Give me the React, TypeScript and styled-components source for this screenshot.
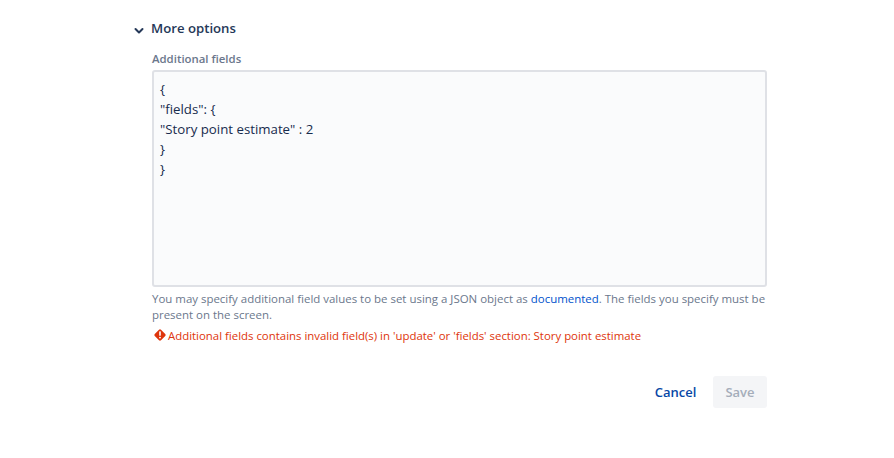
import styled, { createGlobalStyle } from "styled-components";

const GlobalStyle = createGlobalStyle`
  html, body {
    margin: 0;
    padding: 0;
    background: #fff;
  }
  body {
    font-family: "Open Sans", "Noto Sans", "Liberation Sans", sans-serif;
  }
`;

const Page = styled.div`
  width: 894px;
  height: 458px;
  box-sizing: border-box;
  padding: 18px 127px 0 132px;
  overflow: hidden;
`;

const Toggle = styled.div`
  display: flex;
  align-items: center;
  height: 20px;
  gap: 5px;
`;

const Chevron = styled.svg`
  width: 14px;
  height: 14px;
  margin-top: 5px;
  color: #253858;
`;

const ToggleLabel = styled.span`
  font-size: 13.2px;
  font-weight: 600;
  color: #253858;
`;

const Section = styled.div`
  margin: 13px 0 0 20px;
`;

const FieldLabel = styled.label`
  display: block;
  height: 16px;
  line-height: 16px;
  font-size: 11.4px;
  font-weight: 600;
  color: #6b778c;
`;

const JsonInput = styled.div`
  box-sizing: border-box;
  height: 217px;
  margin-top: 3px;
  padding: 7px 6px;
  border: 2px solid #dfe1e6;
  border-radius: 3px;
  background: #fafbfc;
  font-size: 13.25px;
  line-height: 20px;
  color: #172b4d;
`;

const JsonLine = styled.div`
  height: 20px;
`;

const Help = styled.p`
  margin: 4px 0 0;
  font-size: 11.46px;
  line-height: 16px;
  color: #6b778c;
`;

const DocLink = styled.a`
  color: #0052cc;
  text-decoration: none;
`;

const ErrorRow = styled.div`
  display: flex;
  align-items: center;
  gap: 1px;
  margin: 4px 0 0 1px;
  height: 16px;
  font-size: 11.42px;
  color: #de350b;
`;

const ErrorIcon = styled.svg`
  width: 14px;
  height: 14px;
  flex: none;
`;

const Actions = styled.div`
  display: flex;
  justify-content: flex-end;
  align-items: center;
  gap: 4px;
  margin-top: 33px;
`;

const Button = styled.button<{ $primary?: boolean }>`
  height: 32px;
  padding: 0 12.5px;
  border: 0;
  border-radius: 3px;
  font-family: inherit;
  font-size: 13px;
  font-weight: 600;
  background: ${(p) => (p.$primary ? "#f4f5f7" : "transparent")};
  color: ${(p) => (p.$primary ? "#a5adba" : "#0747a6")};
`;

const jsonLines = ["{", '"fields": {', '"Story point estimate" : 2', "}", "}"];

export default function App() {
  return (
    <Page>
      <GlobalStyle />
      <Toggle>
        <Chevron viewBox="0 0 14 14" fill="none">
          <path d="M3.5 5 L7 8.5 L10.5 5" stroke="currentColor" strokeWidth="2" strokeLinecap="round" strokeLinejoin="round" />
        </Chevron>
        <ToggleLabel>More options</ToggleLabel>
      </Toggle>
      <Section>
        <FieldLabel>Additional fields</FieldLabel>
        <JsonInput>
          {jsonLines.map((line, i) => (
            <JsonLine key={i}>{line}</JsonLine>
          ))}
        </JsonInput>
        <Help>
          You may specify additional field values to be set using a JSON object as <DocLink>documented</DocLink>. The fields you specify must be present on the screen.
        </Help>
        <ErrorRow>
          <ErrorIcon viewBox="0 0 14 14">
            <rect x="2.6" y="2.6" width="8.8" height="8.8" rx="1.4" fill="#de350b" transform="rotate(45 7 7)" />
            <rect x="6.2" y="3.2" width="1.6" height="4.6" rx="0.6" fill="#fff" />
            <circle cx="7" cy="9.6" r="0.95" fill="#fff" />
          </ErrorIcon>
          Additional fields contains invalid field(s) in 'update' or 'fields' section: Story point estimate
        </ErrorRow>
        <Actions>
          <Button>Cancel</Button>
          <Button $primary>Save</Button>
        </Actions>
      </Section>
    </Page>
  );
}
